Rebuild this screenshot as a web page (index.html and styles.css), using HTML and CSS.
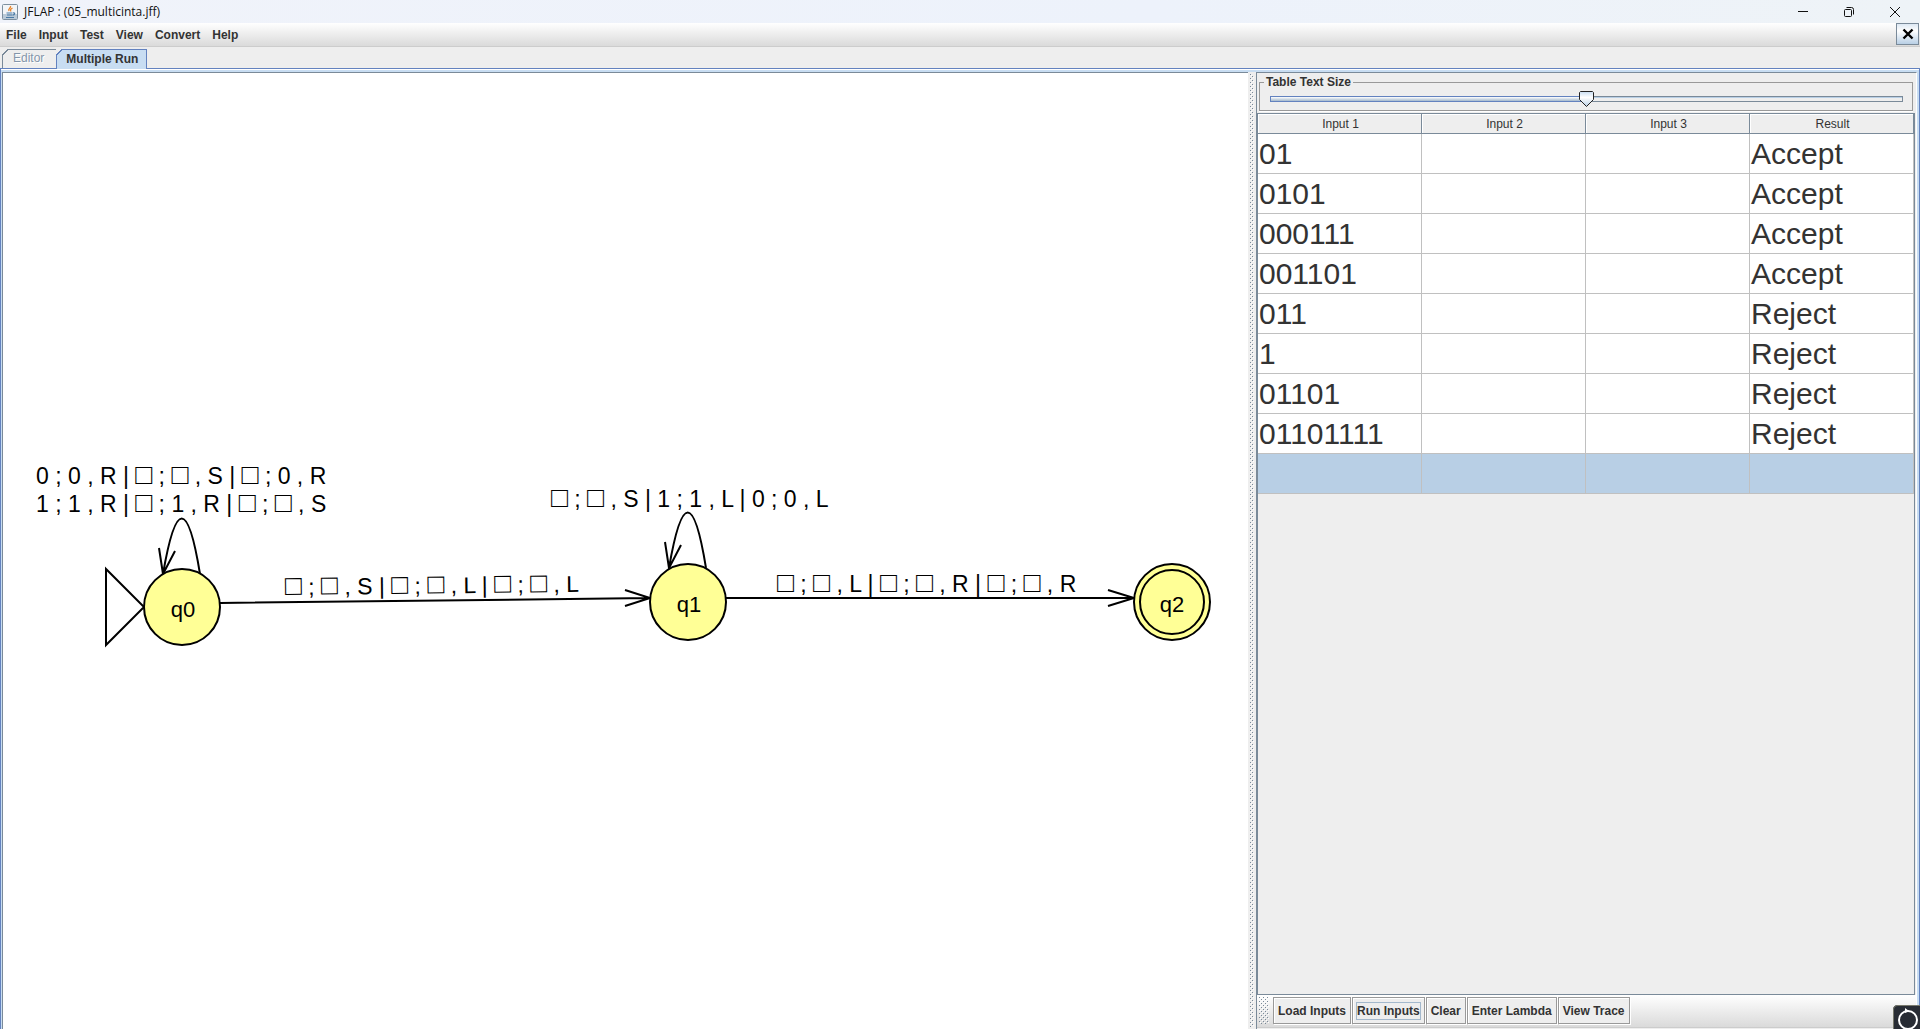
FILE: index.html
```html
<!DOCTYPE html>
<html lang="en">
<head>
<meta charset="utf-8">
<title>JFLAP : (05_multicinta.jff)</title>
<link rel="stylesheet" href="styles.css">
</head>
<body>
<header class="titlebar">
  <svg class="app-icon" width="16" height="16" viewBox="0 0 16 16" aria-hidden="true">
    <rect x=".5" y=".5" width="15" height="15" rx="1" fill="#f2f5f8" stroke="#7d8f9f"/>
    <path d="M1 10h14v5H1z" fill="#b9c9d8"/>
    <path d="M8.500 2c1 2-3 2.500-1.500 5M10.500 4c-2 1-2.500 2-1.500 3.500" fill="none" stroke="#e8842c" stroke-width="1.300"/>
    <path d="M4.500 9h6M5 11h5M4 13.500h8M11 9c2.500-.5 2 2-.5 2.200" fill="none" stroke="#4a7aa5" stroke-width="1.200"/>
  </svg>
  <h1 class="window-title">JFLAP : (05_multicinta.jff)</h1>
  <button class="window-button" aria-label="Minimize"><svg width="12" height="12" viewBox="0 0 12 12"><path d="M1 5.500h10" stroke="#111"/></svg></button>
  <button class="window-button" aria-label="Restore"><svg width="12" height="12" viewBox="0 0 12 12" fill="none" stroke="#111"><rect x="1.500" y="3.500" width="7" height="7" rx="1"/><path d="M3.500 1.500h5q2 0 2 2v5"/></svg></button>
  <button class="window-button" aria-label="Close"><svg width="12" height="12" viewBox="0 0 12 12"><path d="M1 1l10 10M11 1L1 11" stroke="#111"/></svg></button>
</header>
<nav class="menubar">
  <button class="menu">File</button>
  <button class="menu">Input</button>
  <button class="menu">Test</button>
  <button class="menu">View</button>
  <button class="menu">Convert</button>
  <button class="menu">Help</button>
  <button class="dismiss" aria-label="Dismiss tab"><svg width="12" height="12" viewBox="0 0 12 12"><path d="M1.500 1.500l9 9M10.500 1.500l-9 9" stroke="#000" stroke-width="2.400"/></svg></button>
</nav>
<div class="tabs" role="tablist">
  <button class="tab" role="tab" disabled>Editor</button>
  <button class="tab tab-selected" role="tab" aria-selected="true">Multiple Run</button>
</div>
<main class="panel">
  <section class="canvas" aria-label="Automaton">
    <svg class="automaton" width="1245" height="956" viewBox="3 73 1245 956">
      <g class="edge">
        <path d="M106 569v76l38-38z"/>
        <path d="M200 574Q182 463 163 574M159 548l4 26 12-23"/>
        <path d="M706 568Q688 457 669 568M665 542l4 26 12-23"/>
        <path d="M220 603L650 598M625 590l25 8-25 8"/>
        <path d="M726 598H1134M1108 590l26 8-26 8"/>
      </g>
      <g class="state">
        <circle cx="182" cy="607" r="38"/>
        <circle cx="688" cy="602" r="38"/>
        <circle cx="1172" cy="602" r="38"/>
        <circle cx="1172" cy="602" r="32"/>
      </g>
      <g class="state-name">
        <text x="183" y="617">q0</text>
        <text x="689" y="612">q1</text>
        <text x="1172" y="612">q2</text>
      </g>
      <g class="label">
        <text x="36" y="484">0 ; 0 , R | <tspan class="blank">□</tspan> ; <tspan class="blank">□</tspan> , S | <tspan class="blank">□</tspan> ; 0 , R</text>
        <text x="36" y="512">1 ; 1 , R | <tspan class="blank">□</tspan> ; 1 , R | <tspan class="blank">□</tspan> ; <tspan class="blank">□</tspan> , S</text>
        <text x="551" y="507"><tspan class="blank">□</tspan> ; <tspan class="blank">□</tspan> , S | 1 ; 1 , L | 0 ; 0 , L</text>
        <text x="285" y="595" transform="rotate(-.6 285 595)"><tspan class="blank">□</tspan> ; <tspan class="blank">□</tspan> , S | <tspan class="blank">□</tspan> ; <tspan class="blank">□</tspan> , L | <tspan class="blank">□</tspan> ; <tspan class="blank">□</tspan> , L</text>
        <text x="777" y="592"><tspan class="blank">□</tspan> ; <tspan class="blank">□</tspan> , L | <tspan class="blank">□</tspan> ; <tspan class="blank">□</tspan> , R | <tspan class="blank">□</tspan> ; <tspan class="blank">□</tspan> , R</text>
      </g>
    </svg>
  </section>
  <div class="divider" role="separator"></div>
  <section class="runs">
    <fieldset class="text-size">
      <legend><label for="size">Table Text Size</label></legend>
      <input id="size" class="slider" type="range" min="0" max="100" value="50">
    </fieldset>
    <div class="table-scroll">
      <table class="inputs">
        <thead><tr><th>Input 1</th><th>Input 2</th><th>Input 3</th><th>Result</th></tr></thead>
        <tbody>
          <tr><td>01</td><td></td><td></td><td>Accept</td></tr>
          <tr><td>0101</td><td></td><td></td><td>Accept</td></tr>
          <tr><td>000111</td><td></td><td></td><td>Accept</td></tr>
          <tr><td>001101</td><td></td><td></td><td>Accept</td></tr>
          <tr><td>011</td><td></td><td></td><td>Reject</td></tr>
          <tr><td>1</td><td></td><td></td><td>Reject</td></tr>
          <tr><td>01101</td><td></td><td></td><td>Reject</td></tr>
          <tr><td>01101111</td><td></td><td></td><td>Reject</td></tr>
          <tr class="selected"><td></td><td></td><td></td><td></td></tr>
        </tbody>
      </table>
    </div>
    <div class="toolbar">
      <span class="grip"></span>
      <button class="tool">Load Inputs</button>
      <button class="tool"><span class="focus-ring">Run Inputs</span></button>
      <button class="tool">Clear</button>
      <button class="tool">Enter Lambda</button>
      <button class="tool">View Trace</button>
    </div>
  </section>
</main>
<svg class="overlay-badge" width="27" height="24" viewBox="0 0 27 24" aria-hidden="true">
  <path d="M0 24V5q0-5 5-5h22v24z" fill="#282c34"/>
  <path d="M.5 24V5q0-4.500 4.500-4.500h22" fill="none" stroke="#77786c"/>
  <circle cx="15" cy="15" r="9" fill="none" stroke="#fff" stroke-width="2"/>
  <path d="M12 3l4 3-4 2z" fill="#fff"/>
</svg>
</body>
</html>
```
FILE: styles.css
```css
* { box-sizing: border-box; }

body {
  margin: 0;
  height: 100vh;
  display: flex;
  flex-direction: column;
  overflow: hidden;
  background: #eee;
  color: #333;
  font: bold 12px/14px "Liberation Sans", Arial, sans-serif;
}

button {
  margin: 0;
  padding: 0;
  border: 0;
  background: none;
  color: inherit;
  font: inherit;
}

.titlebar {
  flex: none;
  height: 23px;
  display: flex;
  align-items: center;
  padding-left: 2px;
  background: linear-gradient(90deg, #f0f3fa, #edf2fb 60%, #eef3f7);
}

.window-title {
  flex: 1;
  margin: 0 0 0 6px;
  color: #111;
  font: 12px/16px "Open Sans", "Noto Sans", sans-serif;
}

.window-button {
  width: 46px;
  height: 20px;
  display: grid;
  place-items: center;
}

.window-button:last-child { margin-right: 2px; }

.menubar {
  flex: none;
  height: 24px;
  display: flex;
  border-bottom: 1px solid #ccc;
  background: linear-gradient(#fff, #dadada);
}

.menu {
  height: 23px;
  padding: 0 6px;
}

.dismiss {
  width: 23px;
  height: 22px;
  margin: 0 1px 0 auto;
  display: grid;
  place-items: center;
  border: 1px solid #7a8a99;
  background: linear-gradient(#dde8f3, #fff 35%, #b8cfe5);
}

.tabs {
  flex: none;
  height: 21px;
  display: flex;
  align-items: flex-end;
  padding-left: 2px;
}

.tab {
  position: relative;
  height: 19px;
  padding: 0 12px 2px 10px;
  border: 1px solid #7a8a99;
  border-width: 1px 0 0 1px;
  font-weight: normal;
  color: #8496aa;
  text-shadow: 1px 1px #fff;
}

.tab::before {
  content: "";
  position: absolute;
  left: -1px;
  top: -1px;
  width: 7px;
  height: 7px;
  background: linear-gradient(135deg, #eee 4px, #7a8a99 4px, #7a8a99 5px, transparent 5px);
}

.tab-selected {
  height: 20px;
  margin-bottom: -1px;
  padding: 0 8px 1px 9px;
  border-color: #6382bf;
  border-right-width: 1px;
  background: #c8ddf2;
  color: #333;
  font-weight: bold;
  text-shadow: none;
  z-index: 1;
}

.tab-selected::before {
  background: linear-gradient(135deg, #eee 4px, #6382bf 4px, #6382bf 5px, transparent 5px);
}

.panel {
  flex: 1;
  min-height: 0;
  display: flex;
  padding: 3px 2px 0 1px;
  border: 1px solid #6382bf;
  border-bottom: 0;
  background: #c8ddf2;
  box-shadow: inset 0 1px #fff;
}

.canvas {
  flex: 1;
  min-width: 0;
  overflow: hidden;
  border: 1px solid #7a8a99;
  border-width: 1px 0 0 1px;
  background: #fff;
}

.automaton { display: block; }

.edge {
  fill: none;
  stroke: #000;
  stroke-width: 2;
}

.state {
  fill: #ffff96;
  stroke: #000;
  stroke-width: 2;
}

.state-name {
  fill: #000;
  font-size: 22px;
  font-weight: normal;
  text-anchor: middle;
}

.label {
  fill: #000;
  font-size: 23px;
  font-weight: normal;
}

.blank { font-size: 28px; }

.divider {
  width: 8px;
  border: 2px solid #eee;
  background: #eee url("data:image/svg+xml,%3Csvg xmlns='http://www.w3.org/2000/svg' width='4' height='4' shape-rendering='crispEdges'%3E%3Cpath d='M0 0h1v1H0zM2 2h1v1H2z' fill='%237a8a99'/%3E%3Cpath d='M1 1h1v1H1zM3 3h1v1H3z' fill='%23fff'/%3E%3C/svg%3E");
}

.runs {
  width: 661px;
  display: flex;
  flex-direction: column;
  padding-bottom: 1px;
  border: 1px solid #7a8a99;
  border-width: 1px 0 0 1px;
  border-right: 1px solid #fff;
  background: #eee;
}

.text-size {
  margin: 2px 3px 2px 2px;
  padding: 0 9px 2px 10px;
  border: 1px solid #999;
  box-shadow: 0 1px #fff;
}

.text-size legend {
  margin-left: -6px;
  padding: 0 2px;
}

.slider {
  appearance: none;
  display: block;
  width: 100%;
  height: 17px;
  margin: 2px 0 0;
  background: linear-gradient(90deg, #6382bf 50%, #7a8a99 50%) 0 5px / 100% 6px no-repeat;
}

.slider::-webkit-slider-runnable-track {
  height: 17px;
  background:
    linear-gradient(#fff, #a3b8cc) 1px 6px / 50% 4px no-repeat,
    linear-gradient(#b8cfe5 1px, #eee 1px) 1px 6px / calc(100% - 2px) 4px no-repeat;
}

.slider::-webkit-slider-thumb {
  appearance: none;
  width: 15px;
  height: 16px;
  background: url("data:image/svg+xml,%3Csvg xmlns='http://www.w3.org/2000/svg' width='15' height='16'%3E%3ClinearGradient id='g' x2='0' y2='1'%3E%3Cstop stop-color='%23c8ddf2'/%3E%3Cstop offset='.4' stop-color='%23fff'/%3E%3Cstop offset='1' stop-color='%23b8cfe5'/%3E%3C/linearGradient%3E%3Cpath d='M1.500.5h12l1 1v7l-7 7-7-7v-7z' fill='url(%23g)' stroke='%23222'/%3E%3C/svg%3E");
}

.table-scroll {
  flex: 1;
  min-height: 0;
  margin-right: 1px;
  border: 1px solid #7a8a99;
}

.inputs {
  width: 100%;
  table-layout: fixed;
  border-collapse: separate;
  border-spacing: 0;
}

.inputs th {
  height: 20px;
  padding: 0 0 0 2px;
  border: 1px solid #7a8a99;
  border-width: 0 1px 1px 0;
  box-shadow: inset 1px 1px #fff;
  font-weight: normal;
}

.inputs td {
  height: 40px;
  padding: 0 1px;
  border: 1px solid #c0c0c0;
  border-width: 0 1px 1px 0;
  background: #fff;
  font-size: 30px;
  font-weight: normal;
  line-height: 34px;
}

.inputs .selected td { background: #b8cfe5; }

.toolbar {
  flex: none;
  height: 33px;
  display: flex;
  gap: 1px;
  padding: 2px 0 3px 2px;
  border-bottom: 1px solid #ccc;
  background: linear-gradient(#fff, #dadada);
}

.grip {
  width: 10px;
  margin-right: 3px;
  background: url("data:image/svg+xml,%3Csvg xmlns='http://www.w3.org/2000/svg' width='4' height='4' shape-rendering='crispEdges'%3E%3Cpath d='M0 0h1v1H0zM2 2h1v1H2z' fill='%237a8a99'/%3E%3Cpath d='M1 1h1v1H1zM3 3h1v1H3z' fill='%23fff'/%3E%3C/svg%3E");
}

.tool {
  height: 27px;
  padding: 0 4px;
  border: 1px solid #999;
  background: #eee;
  box-shadow: inset 1px 1px #fff, 1px 1px #fff;
}

.focus-ring {
  display: block;
  margin: 0 -1px;
  padding: 1px 0;
  border: 1px solid #a3b8cc;
}

.overlay-badge {
  position: fixed;
  right: 0;
  bottom: 0;
}
```
